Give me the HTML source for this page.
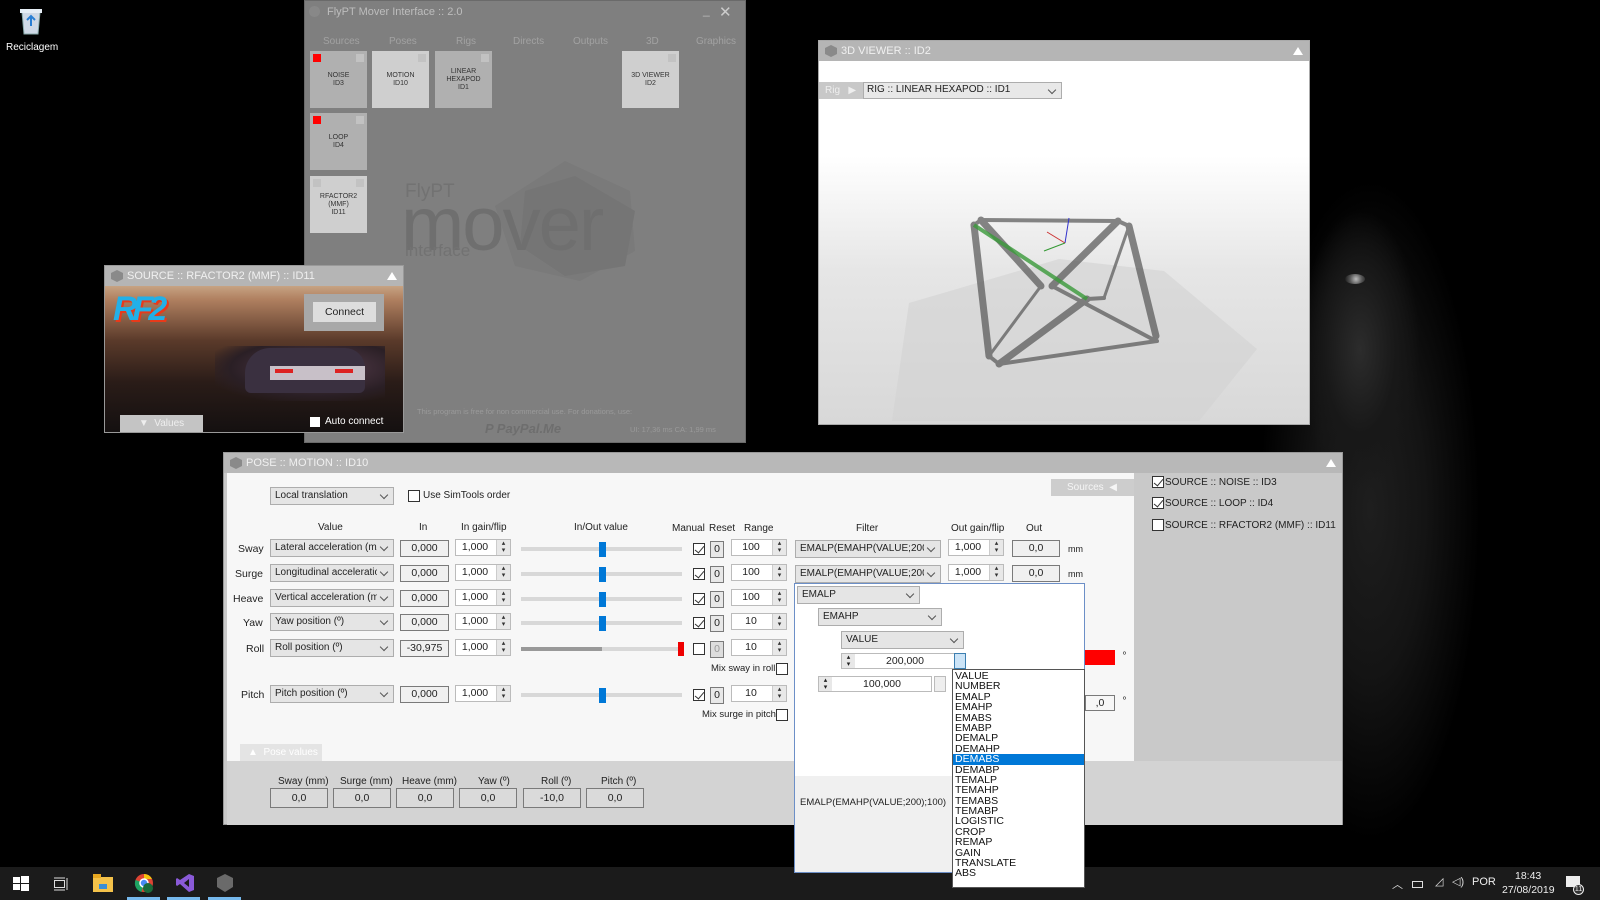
<!DOCTYPE html>
<html><head><meta charset="utf-8"><style>
*{box-sizing:border-box;margin:0;padding:0}
body{width:1600px;height:900px;background:#000;position:relative;overflow:hidden;font-family:"Liberation Sans",sans-serif;font-size:11px;color:#222}
.a{position:absolute}
.t{position:absolute;white-space:nowrap}
.dd{position:absolute;height:18px;background:#e5e5e5;border:1px solid #adadad;padding:2px 16px 2px 4px;font-size:10px;white-space:nowrap;overflow:hidden}
.dd:before{content:"";position:absolute;right:0;top:0;width:16px;height:16px;background:inherit}
.dd:after{content:"";position:absolute;right:6px;top:4px;width:5px;height:5px;border-right:1px solid #555;border-bottom:1px solid #555;transform:rotate(45deg)}
.box{position:absolute;height:17px;background:#f0f0f0;border:1px solid #7a7a7a;text-align:center;font-size:10.5px;line-height:15px}
.num{position:absolute;height:17px;background:#fff;border:1px solid #bbb;font-size:10.5px;line-height:14px;padding-right:16px;text-align:center}
.num:after{content:"▴\A▾";white-space:pre;position:absolute;right:0;top:0;width:13px;height:15px;background:#e8e8e8;border-left:1px solid #ccc;font-size:7px;line-height:7px;text-align:center;color:#333}
.chk{position:absolute;width:12px;height:12px;border:1px solid #333;background:#fff}
.chk.on:after{content:"";position:absolute;left:3px;top:0;width:4px;height:8px;border-right:1.3px solid #333;border-bottom:1.3px solid #333;transform:rotate(40deg)}
.trk{position:absolute;height:4px;background:#d8d8d8;left:521px;width:161px}
.thumb{position:absolute;width:7px;height:15px;background:#0078d7}
.tile{position:absolute;width:57px;height:57px;background:#b0b0b0;font-size:7px;text-align:center;color:#333;line-height:8px}
.tile i{position:absolute;right:3px;top:3px;width:8px;height:8px;background:#c2c2c2}
.tile b{position:absolute;left:3px;top:3px;width:8px;height:8px;background:#f00}
.ttl{position:absolute;left:0;right:0;top:0;height:20px;background:#b5b5b5;color:#f0f0f0;font-size:11px;line-height:20px;padding-left:22px}
.ttl:before{content:"";position:absolute;left:6px;top:4px;width:12px;height:12px;background:#8a8a8a;clip-path:polygon(50% 0,100% 25%,100% 75%,50% 100%,0 75%,0 25%)}
.tri{position:absolute;right:6px;top:6px;width:0;height:0;border-left:5px solid transparent;border-right:5px solid transparent;border-bottom:8px solid #fff}
.li{height:10.4px;line-height:10.4px;font-size:10.5px;padding-left:2px;color:#111}
</style></head><body>

<!-- gorilla -->
<div class="a" style="left:1240px;top:90px;width:320px;height:780px;background:radial-gradient(ellipse 110px 330px at 130px 420px,#1e1e1e,#141414 50%,rgba(0,0,0,0) 100%)"></div>
<div class="a" style="left:1310px;top:200px;width:130px;height:320px;background:radial-gradient(ellipse 60px 140px at 50px 150px,#2c2c2c,#181818 60%,rgba(0,0,0,0))"></div>
<div class="a" style="left:1345px;top:274px;width:20px;height:10px;border-radius:50%;background:radial-gradient(circle at 55% 50%,#bbb,#555 50%,#111)"></div>

<!-- recycle bin -->
<svg class="a" style="left:18px;top:6px" width="26" height="30"><path d="M4 6h18l-2 22H6z" fill="#cfd9e6" stroke="#8aa" /><rect x="2" y="3" width="22" height="4" fill="#e6eef6"/><path d="M9 14l4-4 4 4M13 10v10" stroke="#2a7fd4" stroke-width="2" fill="none"/></svg>
<div class="t" style="left:6px;top:42px;color:#fff;font-size:10px">Reciclagem</div>

<!-- taskbar -->
<div class="a" style="left:0;top:867px;width:1600px;height:33px;background:#1b1b1b"></div>
<svg class="a" style="left:13px;top:876px" width="16" height="16"><rect x="0" y="1" width="7" height="6" fill="#fff"/><rect x="8" y="0" width="8" height="7" fill="#fff"/><rect x="0" y="8" width="7" height="6" fill="#fff"/><rect x="8" y="8" width="8" height="7" fill="#fff"/></svg>
<svg class="a" style="left:53px;top:876px" width="16" height="16" fill="none" stroke="#ddd"><rect x="1.5" y="4.5" width="10" height="7"/><path d="M1 2h11M1 14h11M14 2v12"/></svg>
<svg class="a" style="left:93px;top:874px" width="20" height="18"><rect x="0" y="3" width="20" height="15" fill="#f4c24a"/><rect x="0" y="0" width="8" height="4" fill="#e8a820"/><rect x="6" y="10" width="8" height="5" fill="#3a8ed6"/></svg>
<svg class="a" style="left:134px;top:873px" width="20" height="20"><circle cx="10" cy="10" r="9" fill="#dd4433"/><path d="M10 1a9 9 0 0 1 8 5H10z" fill="#f4c20d"/><path d="M1.5 7a9 9 0 0 0 6 12L10 10z" fill="#1da462"/><circle cx="10" cy="10" r="4" fill="#4a8af4" stroke="#fff" stroke-width="1.5"/><circle cx="14" cy="15" r="5" fill="#1b6a3a"/></svg>
<svg class="a" style="left:175px;top:873px" width="20" height="20"><path d="M14 1l5 2v14l-5 2-9-8-3 2-1-1V6l1-1 3 2z" fill="#8a5ad8"/><path d="M14 6v8l-5-4z" fill="#1b1b1b"/></svg>
<svg class="a" style="left:216px;top:874px" width="18" height="18"><polygon points="9,0 17,4 17,13 9,18 1,13 1,4" fill="#6a6a6a"/></svg>
<div class="a" style="left:127px;top:897px;width:33px;height:3px;background:#76b9ed"></div>
<div class="a" style="left:167px;top:897px;width:33px;height:3px;background:#76b9ed"></div>
<div class="a" style="left:208px;top:897px;width:33px;height:3px;background:#76b9ed"></div>
<div class="t" style="left:1392px;top:876px;color:#ddd;font-size:11px">︿</div>
<div class="a" style="left:1412px;top:881px;width:11px;height:7px;border:1px solid #ddd"></div>
<div class="t" style="left:1435px;top:875px;color:#ddd;font-size:11px">◿</div>
<div class="t" style="left:1452px;top:875px;color:#ddd;font-size:11px">◁)</div>
<div class="t" style="left:1472px;top:876px;color:#eee;font-size:11px">POR</div>
<div class="t" style="left:1515px;top:870px;color:#eee;font-size:10.5px">18:43</div>
<div class="t" style="left:1502px;top:884px;color:#eee;font-size:10.5px">27/08/2019</div>
<div class="a" style="left:1566px;top:876px;width:14px;height:11px;background:#eee"></div>
<div class="a" style="left:1573px;top:884px;width:11px;height:11px;border-radius:50%;background:#333;border:1px solid #eee;color:#eee;font-size:7px;text-align:center;line-height:9px">11</div>

<!-- Mover main window -->
<div class="a" style="left:304px;top:0;width:442px;height:443px;background:#7f7f7f;border:1px solid #6a6a6a">
 <div class="t" style="left:22px;top:5px;color:#bdbdbd;font-size:11px">FlyPT Mover Interface :: 2.0</div>
 <div class="a" style="left:4px;top:5px;width:11px;height:11px;border-radius:50%;background:#888"></div>
 <div class="t" style="left:398px;top:2px;color:#bbb;font-size:12px">_</div>
 <div class="t" style="left:414px;top:2px;color:#ccc;font-size:15px">✕</div>
 <div class="t" style="left:18px;top:35px;color:#a2a2a2;font-size:10px">Sources</div>
 <div class="t" style="left:84px;top:35px;color:#a2a2a2;font-size:10px">Poses</div>
 <div class="t" style="left:151px;top:35px;color:#a2a2a2;font-size:10px">Rigs</div>
 <div class="t" style="left:208px;top:35px;color:#a2a2a2;font-size:10px">Directs</div>
 <div class="t" style="left:268px;top:35px;color:#a2a2a2;font-size:10px">Outputs</div>
 <div class="t" style="left:341px;top:35px;color:#a2a2a2;font-size:10px">3D</div>
 <div class="t" style="left:391px;top:35px;color:#a2a2a2;font-size:10px">Graphics</div>
 <svg class="a" style="left:180px;top:155px" width="160" height="130"><polygon points="80,5 145,35 150,95 95,125 30,110 10,50" fill="#7a7a7a"/><polygon points="90,20 150,55 140,110 80,120 35,90 40,35" fill="#757575"/></svg>
 <div class="t" style="left:100px;top:180px;color:#727272;font-size:19px">FlyPT</div>
 <div class="t" style="left:96px;top:180px;color:#6f6f6f;font-size:76px;letter-spacing:-2px">mover</div>
 <div class="t" style="left:100px;top:240px;color:#727272;font-size:17px">interface</div>
 <div class="t" style="left:112px;top:406px;color:#9a9a9a;font-size:7.5px">This program is free for non commercial use. For donations, use:</div>
 <div class="t" style="left:180px;top:420px;color:#6e6e6e;font-size:13px;font-weight:bold;font-style:italic">P PayPal.Me</div>
 <div class="t" style="left:325px;top:424px;color:#9a9a9a;font-size:7.5px">UI: 17,36 ms  CA: 1,99 ms</div>
</div>
<div class="tile" style="left:310px;top:51px;padding-top:21px"><b></b><i></i>NOISE<br>ID3</div>
<div class="tile" style="left:372px;top:51px;background:#cfcfcf;padding-top:21px"><i></i>MOTION<br>ID10</div>
<div class="tile" style="left:435px;top:51px;padding-top:17px"><i></i>LINEAR<br>HEXAPOD<br>ID1</div>
<div class="tile" style="left:622px;top:51px;background:#cfcfcf;padding-top:21px"><i></i>3D VIEWER<br>ID2</div>
<div class="tile" style="left:310px;top:113px;padding-top:21px"><b></b><i></i>LOOP<br>ID4</div>
<div class="tile" style="left:310px;top:176px;background:#cfcfcf;padding-top:17px"><i style="left:3px"></i><i></i>RFACTOR2<br>(MMF)<br>ID11</div>

<!-- rF2 source window -->
<div class="a" style="left:104px;top:265px;width:300px;height:168px;border:1px solid #999;overflow:hidden;background:linear-gradient(#e8d8b8 0%,#b08060 20%,#5a3a2a 45%,#2a1c18 70%,#141010 100%)">
 <div class="ttl">SOURCE :: RFACTOR2 (MMF) :: ID11<div class="tri"></div></div>
 <div class="a" style="left:110px;top:80px;width:170px;height:55px;background:radial-gradient(ellipse at 60% 40%,#5a4050,#2a1f25 60%,rgba(0,0,0,0) 80%)"></div>
 <div class="a" style="left:140px;top:82px;width:120px;height:45px;background:#3a3040;border-radius:25px 20px 6px 6px"></div>
 <div class="a" style="left:165px;top:100px;width:95px;height:14px;background:#c8c0c8"></div>
 <div class="a" style="left:170px;top:103px;width:18px;height:4px;background:#d22"></div>
 <div class="a" style="left:230px;top:103px;width:18px;height:4px;background:#d22"></div>
 <div class="t" style="left:8px;top:24px;font-size:34px;font-style:italic;font-weight:bold;color:#22b0e8;letter-spacing:-5px;text-shadow:2px 2px 0 #e83a1a">RF2</div>
 <div class="a" style="left:199px;top:28px;width:80px;height:37px;background:#a8a8a8"></div>
 <div class="a" style="left:208px;top:36px;width:63px;height:20px;background:#ddd;text-align:center;line-height:20px;font-size:10.5px">Connect</div>
 <div class="a" style="left:15px;top:149px;width:83px;height:19px;background:#c4c4c4;color:#eee;font-size:10px;line-height:18px;text-align:center">▼ &nbsp;Values</div>
 <div class="a" style="left:205px;top:151px;width:10px;height:10px;background:#fff"></div>
 <div class="t" style="left:220px;top:150px;color:#fff;font-size:10px">Auto connect</div>
</div>

<!-- 3D viewer -->
<div class="a" style="left:818px;top:40px;width:492px;height:385px;background:linear-gradient(#fff 0%,#fff 30%,#e6e6e6 60%,#d8d8d8 100%);border:1px solid #aaa;overflow:hidden">
 <div class="ttl">3D VIEWER :: ID2<div class="tri"></div></div>
 <div class="a" style="left:0;top:41px;width:44px;height:17px;background:#c8c8c8;color:#eee;font-size:10px;line-height:17px;padding-left:6px">Rig &nbsp;&nbsp;▶</div>
 <div class="dd" style="left:44px;top:41px;width:199px;height:17px;background:#e8e8e8;padding:1px 3px">RIG :: LINEAR HEXAPOD :: ID1</div>
 <svg class="a" style="left:0;top:0" width="492" height="385">
  <polygon points="73,380 90,262 240,218 345,230 438,308 380,380" fill="#d2d2d2" opacity=".6"/>
  <g stroke="#555" stroke-linecap="round" opacity=".7" fill="none">
   <line x1="162" y1="179" x2="299" y2="180" stroke-width="4"/>
   <line x1="299" y1="180" x2="310" y2="185" stroke-width="4"/>
   <line x1="162" y1="179" x2="155" y2="184" stroke-width="4"/>
   <line x1="162" y1="179" x2="222" y2="245" stroke-width="7"/>
   <line x1="299" y1="180" x2="233" y2="245" stroke-width="7"/>
   <line x1="310" y1="185" x2="285" y2="257" stroke-width="3"/>
   <line x1="310" y1="185" x2="337" y2="295" stroke-width="7"/>
   <line x1="155" y1="184" x2="170" y2="315" stroke-width="7"/>
   <line x1="222" y1="245" x2="170" y2="315" stroke-width="3"/>
   <line x1="268" y1="258" x2="180" y2="323" stroke-width="7"/>
   <line x1="268" y1="258" x2="285" y2="257" stroke-width="4"/>
   <line x1="233" y1="245" x2="337" y2="300" stroke-width="4"/>
   <line x1="180" y1="323" x2="338" y2="300" stroke-width="4"/>
   <line x1="170" y1="315" x2="180" y2="323" stroke-width="4"/>
  </g>
  <line x1="155" y1="184" x2="268" y2="258" stroke="#3a9a3a" stroke-width="4" opacity=".8"/>
  <line x1="246" y1="202" x2="250" y2="177" stroke="#33c" stroke-width="1"/>
  <line x1="246" y1="202" x2="228" y2="191" stroke="#c33" stroke-width="1"/>
  <line x1="246" y1="202" x2="225" y2="210" stroke="#393" stroke-width="1"/>
 </svg>
</div>

<!-- Pose window -->
<div class="a" style="left:223px;top:452px;width:1120px;height:373px;background:#c9c9c9;border:1px solid #999">
 <div class="ttl" style="background:#b8b8b8">POSE :: MOTION :: ID10<div class="tri"></div></div>
 <div class="a" style="left:3px;top:20px;width:907px;height:288px;background:#f7f7f7"></div>
 <div class="a" style="left:3px;top:308px;width:1115px;height:64px;background:#d3d3d3"></div>
 <div class="a" style="left:16px;top:291px;width:82px;height:17px;background:#e4e4e4;color:#fff;font-size:10px;line-height:17px;padding-left:8px">▲ &nbsp;Pose values</div>
 <div class="a" style="left:827px;top:26px;width:83px;height:17px;background:#cdcdcd;color:#f5f5f5;font-size:10px;line-height:17px;padding-left:16px">Sources &nbsp;◀</div>
</div>
<div class="chk on" style="left:1152px;top:476px"></div><div class="t" style="left:1165px;top:477px;font-size:10px">SOURCE :: NOISE :: ID3</div>
<div class="chk on" style="left:1152px;top:497px"></div><div class="t" style="left:1165px;top:498px;font-size:10px">SOURCE :: LOOP :: ID4</div>
<div class="chk" style="left:1152px;top:519px"></div><div class="t" style="left:1165px;top:520px;font-size:10px">SOURCE :: RFACTOR2 (MMF) :: ID11</div>

<div class="dd" style="left:270px;top:487px;width:124px">Local translation</div>
<div class="chk" style="left:408px;top:490px"></div><div class="t" style="left:423px;top:490px;font-size:10px">Use SimTools order</div>

<div class="t" style="left:318px;top:522px;font-size:10px">Value</div>
<div class="t" style="left:419px;top:522px;font-size:10px">In</div>
<div class="t" style="left:461px;top:522px;font-size:10px">In gain/flip</div>
<div class="t" style="left:574px;top:522px;font-size:10px">In/Out value</div>
<div class="t" style="left:672px;top:523px;font-size:10px">Manual</div>
<div class="t" style="left:709px;top:523px;font-size:10px">Reset</div>
<div class="t" style="left:744px;top:523px;font-size:10px">Range</div>
<div class="t" style="left:856px;top:523px;font-size:10px">Filter</div>
<div class="t" style="left:951px;top:523px;font-size:10px">Out gain/flip</div>
<div class="t" style="left:1026px;top:523px;font-size:10px">Out</div>

<!-- rows -->
<div class="t" style="left:238px;top:543px;font-size:10.5px">Sway</div>
<div class="dd" style="left:270px;top:539px;width:124px">Lateral acceleration (m/s²)</div>
<div class="box" style="left:400px;top:540px;width:49px">0,000</div>
<div class="num" style="left:455px;top:539px;width:56px">1,000</div>
<div class="trk" style="top:547px"></div><div class="thumb" style="left:599px;top:542px"></div>
<div class="chk on" style="left:693px;top:543px"></div>
<div class="box" style="left:710px;top:541px;width:14px;background:#e8e8e8">0</div>
<div class="num" style="left:731px;top:539px;width:56px">100</div>
<div class="dd" style="left:795px;top:540px;width:146px">EMALP(EMAHP(VALUE;200...</div>
<div class="num" style="left:948px;top:539px;width:56px">1,000</div>
<div class="box" style="left:1012px;top:540px;width:48px">0,0</div>
<div class="t" style="left:1068px;top:544px;font-size:9px">mm</div>

<div class="t" style="left:235px;top:568px;font-size:10.5px">Surge</div>
<div class="dd" style="left:270px;top:564px;width:124px">Longitudinal acceleration (m</div>
<div class="box" style="left:400px;top:565px;width:49px">0,000</div>
<div class="num" style="left:455px;top:564px;width:56px">1,000</div>
<div class="trk" style="top:572px"></div><div class="thumb" style="left:599px;top:567px"></div>
<div class="chk on" style="left:693px;top:568px"></div>
<div class="box" style="left:710px;top:566px;width:14px;background:#e8e8e8">0</div>
<div class="num" style="left:731px;top:564px;width:56px">100</div>
<div class="dd" style="left:795px;top:565px;width:146px">EMALP(EMAHP(VALUE;200...</div>
<div class="num" style="left:948px;top:564px;width:56px">1,000</div>
<div class="box" style="left:1012px;top:565px;width:48px">0,0</div>
<div class="t" style="left:1068px;top:569px;font-size:9px">mm</div>

<div class="t" style="left:233px;top:593px;font-size:10.5px">Heave</div>
<div class="dd" style="left:270px;top:589px;width:124px">Vertical acceleration (m/s²)</div>
<div class="box" style="left:400px;top:590px;width:49px">0,000</div>
<div class="num" style="left:455px;top:589px;width:56px">1,000</div>
<div class="trk" style="top:597px"></div><div class="thumb" style="left:599px;top:592px"></div>
<div class="chk on" style="left:693px;top:593px"></div>
<div class="box" style="left:710px;top:591px;width:14px;background:#e8e8e8">0</div>
<div class="num" style="left:731px;top:589px;width:56px">100</div>

<div class="t" style="left:243px;top:617px;font-size:10.5px">Yaw</div>
<div class="dd" style="left:270px;top:613px;width:124px">Yaw position (º)</div>
<div class="box" style="left:400px;top:614px;width:49px">0,000</div>
<div class="num" style="left:455px;top:613px;width:56px">1,000</div>
<div class="trk" style="top:621px"></div><div class="thumb" style="left:599px;top:616px"></div>
<div class="chk on" style="left:693px;top:617px"></div>
<div class="box" style="left:710px;top:615px;width:14px;background:#e8e8e8">0</div>
<div class="num" style="left:731px;top:613px;width:56px">10</div>

<div class="t" style="left:246px;top:643px;font-size:10.5px">Roll</div>
<div class="dd" style="left:270px;top:639px;width:124px">Roll position (º)</div>
<div class="box" style="left:400px;top:640px;width:49px">-30,975</div>
<div class="num" style="left:455px;top:639px;width:56px">1,000</div>
<div class="trk" style="top:647px"></div><div class="a" style="left:521px;top:647px;width:81px;height:4px;background:#999"></div>
<div class="a" style="left:678px;top:642px;width:6px;height:14px;background:#e00"></div>
<div class="chk" style="left:693px;top:643px"></div>
<div class="box" style="left:710px;top:641px;width:14px;background:#ddd;color:#999">0</div>
<div class="num" style="left:731px;top:639px;width:56px">10</div>
<div class="t" style="left:711px;top:663px;font-size:9.5px">Mix sway in roll</div>
<div class="chk" style="left:776px;top:663px"></div>

<div class="t" style="left:241px;top:689px;font-size:10.5px">Pitch</div>
<div class="dd" style="left:270px;top:685px;width:124px">Pitch position (º)</div>
<div class="box" style="left:400px;top:686px;width:49px">0,000</div>
<div class="num" style="left:455px;top:685px;width:56px">1,000</div>
<div class="trk" style="top:693px"></div><div class="thumb" style="left:599px;top:688px"></div>
<div class="chk on" style="left:693px;top:689px"></div>
<div class="box" style="left:710px;top:687px;width:14px;background:#e8e8e8">0</div>
<div class="num" style="left:731px;top:685px;width:56px">10</div>
<div class="t" style="left:702px;top:709px;font-size:9.5px">Mix surge in pitch</div>
<div class="chk" style="left:776px;top:709px"></div>

<div class="a" style="left:1085px;top:650px;width:30px;height:15px;background:#f00"></div>
<div class="t" style="left:1123px;top:650px;font-size:8px">º</div>
<div class="box" style="left:1085px;top:695px;width:30px;height:16px;background:#f7f7f7">,0</div>
<div class="t" style="left:1123px;top:695px;font-size:8px">º</div>

<!-- pose values -->
<div class="t" style="left:278px;top:776px;font-size:10px">Sway (mm)</div>
<div class="t" style="left:340px;top:776px;font-size:10px">Surge (mm)</div>
<div class="t" style="left:402px;top:776px;font-size:10px">Heave (mm)</div>
<div class="t" style="left:478px;top:776px;font-size:10px">Yaw (º)</div>
<div class="t" style="left:541px;top:776px;font-size:10px">Roll (º)</div>
<div class="t" style="left:601px;top:776px;font-size:10px">Pitch (º)</div>
<div class="box" style="left:270px;top:788px;width:58px;height:20px;line-height:18px;background:#dadada">0,0</div>
<div class="box" style="left:333px;top:788px;width:58px;height:20px;line-height:18px;background:#dadada">0,0</div>
<div class="box" style="left:396px;top:788px;width:58px;height:20px;line-height:18px;background:#dadada">0,0</div>
<div class="box" style="left:459px;top:788px;width:58px;height:20px;line-height:18px;background:#dadada">0,0</div>
<div class="box" style="left:523px;top:788px;width:58px;height:20px;line-height:18px;background:#dadada">-10,0</div>
<div class="box" style="left:586px;top:788px;width:58px;height:20px;line-height:18px;background:#dadada">0,0</div>

<!-- filter popup -->
<div class="a" style="left:794px;top:583px;width:291px;height:290px;background:#fff;border:1px solid #6c8fc7">
 <div class="a" style="left:0;top:192px;width:289px;height:96px;background:#f0f0f0"></div>
 <div class="t" style="left:5px;top:213px;font-size:9.5px">EMALP(EMAHP(VALUE;200);100)</div>
</div>
<div class="dd" style="left:797px;top:586px;width:123px">EMALP</div>
<div class="dd" style="left:818px;top:608px;width:124px">EMAHP</div>
<div class="dd" style="left:841px;top:631px;width:123px">VALUE</div>
<div class="a" style="left:841px;top:653px;width:114px;height:16px;background:#fff;border:1px solid #bbb;font-size:10.5px;text-align:center;line-height:14px;padding-left:14px">200,000<span class="a" style="left:0;top:0;width:13px;height:14px;background:#e8e8e8;font-size:7px;line-height:7px">▴<br>▾</span></div>
<div class="a" style="left:954px;top:653px;width:12px;height:16px;background:#cce4f7;border:1px solid #3c7fb1"></div>
<div class="a" style="left:818px;top:676px;width:114px;height:16px;background:#fff;border:1px solid #bbb;font-size:10.5px;text-align:center;line-height:14px;padding-left:14px">100,000<span class="a" style="left:0;top:0;width:13px;height:14px;background:#e8e8e8;font-size:7px;line-height:7px">▴<br>▾</span></div>
<div class="a" style="left:934px;top:676px;width:12px;height:16px;background:#eee;border:1px solid #bbb"></div>
<div class="a" style="left:952px;top:669px;width:133px;height:219px;background:#fff;border:1px solid #555;padding-top:1px">
 <div class="li">VALUE</div><div class="li">NUMBER</div><div class="li">EMALP</div><div class="li">EMAHP</div><div class="li">EMABS</div><div class="li">EMABP</div><div class="li">DEMALP</div><div class="li">DEMAHP</div><div class="li" style="background:#0078d7;color:#fff">DEMABS</div><div class="li">DEMABP</div><div class="li">TEMALP</div><div class="li">TEMAHP</div><div class="li">TEMABS</div><div class="li">TEMABP</div><div class="li">LOGISTIC</div><div class="li">CROP</div><div class="li">REMAP</div><div class="li">GAIN</div><div class="li">TRANSLATE</div><div class="li">ABS</div>
</div>
</body></html>
